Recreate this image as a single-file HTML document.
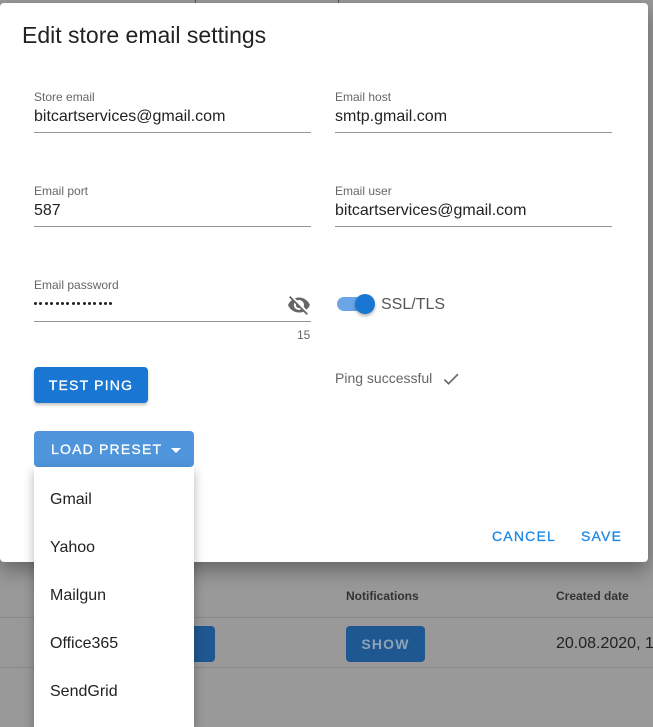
<!DOCTYPE html>
<html><head><style>
body{margin:0;width:653px;height:721px;background:#999;position:relative;overflow:hidden;font-family:"Liberation Sans",sans-serif;}
.a{position:absolute;}
.dlg{left:0;top:3px;width:648px;height:559px;background:#fff;border-radius:4px;box-shadow:0 8px 20px rgba(0,0,0,.35);}
.lbl{font-size:12px;color:#666;}
.val{font-size:16px;color:#222;}
.line{height:1px;background:#949494;}
.btn{color:#fff;font-size:14px;font-weight:normal;letter-spacing:1.2px;border-radius:4px;text-align:center;-webkit-text-stroke:0.3px #fff;}
.item{left:50px;font-size:16px;color:#222;}
.dots{display:flex;gap:2.4px;}
.dots i{display:block;width:3px;height:3px;border-radius:50%;background:#222;}
</style></head><body>
<div class="a" style="left:195px;top:0;width:1px;height:3px;background:#555"></div>
<div class="a" style="left:338px;top:0;width:1px;height:3px;background:#555"></div>
<div class="a" style="left:0;top:617px;width:653px;height:1px;background:#888"></div>
<div class="a" style="left:0;top:667px;width:653px;height:1px;background:#888"></div>
<div class="a" style="left:346px;top:589px;font-size:12px;font-weight:bold;color:#333">Notifications</div>
<div class="a" style="left:556px;top:589px;font-size:12px;font-weight:bold;color:#333">Created date</div>
<div class="a" style="left:150px;top:626px;width:65px;height:36px;background:#1f5890;border-radius:4px"></div>
<div class="a" style="left:346px;top:626px;width:79px;height:36px;line-height:36px;background:#1f5890;color:#8fa3b8;border-radius:4px;text-align:center;font-size:14px;letter-spacing:1.2px;font-weight:bold">SHOW</div>
<div class="a" style="left:556px;top:635px;font-size:16px;color:#222;white-space:nowrap">20.08.2020, 18:</div>

<div class="a dlg"></div>
<div class="a" style="left:22px;top:22px;font-size:23px;color:#222">Edit store email settings</div>

<div class="a lbl" style="left:34px;top:90px">Store email</div>
<div class="a val" style="left:34px;top:108px">bitcartservices@gmail.com</div>
<div class="a line" style="left:34px;top:132px;width:277px"></div>
<div class="a lbl" style="left:335px;top:90px">Email host</div>
<div class="a val" style="left:335px;top:108px">smtp.gmail.com</div>
<div class="a line" style="left:335px;top:132px;width:277px"></div>

<div class="a lbl" style="left:34px;top:184px">Email port</div>
<div class="a val" style="left:34px;top:202px">587</div>
<div class="a line" style="left:34px;top:226px;width:277px"></div>
<div class="a lbl" style="left:335px;top:184px">Email user</div>
<div class="a val" style="left:335px;top:202px">bitcartservices@gmail.com</div>
<div class="a line" style="left:335px;top:226px;width:277px"></div>

<div class="a lbl" style="left:34px;top:278px">Email password</div>
<div class="a dots" style="left:34px;top:302px"><i></i><i></i><i></i><i></i><i></i><i></i><i></i><i></i><i></i><i></i><i></i><i></i><i></i><i></i><i></i></div>
<svg class="a" style="left:287px;top:293px" width="24" height="24" viewBox="0 0 24 24"><path fill="#666" d="M12 7c2.8 0 5 2.2 5 5 0 .6-.1 1.3-.4 1.8l2.9 2.9c1.5-1.3 2.7-2.9 3.4-4.7-1.7-4.4-6-7.5-11-7.5-1.4 0-2.7.3-4 .7l2.2 2.2C10.7 7.1 11.4 7 12 7zM2 4.3l2.3 2.3.5.5C3.1 8.4 1.8 10.1 1 12c1.7 4.4 6 7.5 11 7.5 1.6 0 3-.3 4.4-.8l.4.4 2.9 2.9 1.3-1.3L3.3 3 2 4.3zm5.5 5.5l1.5 1.5c0 .2-.1.5-.1.7 0 1.7 1.3 3 3 3 .2 0 .4 0 .7-.1l1.5 1.5c-.7.3-1.4.5-2.2.5-2.8 0-5-2.2-5-5 0-.8.2-1.5.6-2.1z"/></svg>
<div class="a line" style="left:34px;top:321px;width:277px"></div>
<div class="a" style="left:297px;top:328px;font-size:12px;color:#666">15</div>

<div class="a" style="left:337px;top:297px;width:36px;height:14px;border-radius:7px;background:#6aa5e6"></div>
<div class="a" style="left:355px;top:294px;width:20px;height:20px;border-radius:10px;background:#1976d2;box-shadow:0 2px 3px rgba(0,0,0,.3)"></div>
<div class="a" style="left:381px;top:296px;font-size:16px;color:#555">SSL/TLS</div>

<div class="a btn" style="left:34px;top:367px;width:114px;height:36px;line-height:36px;background:#1976d2;box-shadow:0 2px 3px rgba(0,0,0,.25)">TEST PING</div>
<div class="a" style="left:335px;top:370px;font-size:14px;color:#666">Ping successful</div>
<svg class="a" style="left:441px;top:369px" width="20" height="20" viewBox="0 0 24 24"><path fill="#666" d="M9 16.2L4.8 12l-1.4 1.4L9 19 21 7l-1.4-1.4L9 16.2z"/></svg>

<div class="a btn" style="left:34px;top:431px;width:160px;height:36px;line-height:36px;background:#4f95dc;text-align:left;padding-left:17px;box-sizing:border-box">LOAD PRESET <span style="display:inline-block;margin-left:4px;width:0;height:0;border-left:5px solid transparent;border-right:5px solid transparent;border-top:5px solid #fff;vertical-align:middle"></span></div>

<div class="a" style="left:492px;top:528px;font-size:14px;letter-spacing:1.2px;color:#1e88e5;-webkit-text-stroke:0.3px #1e88e5">CANCEL</div>
<div class="a" style="left:581px;top:528px;font-size:14px;letter-spacing:1.2px;color:#1e88e5;-webkit-text-stroke:0.3px #1e88e5">SAVE</div>

<div class="a" style="left:34px;top:467px;width:160px;height:260px;background:#fff;box-shadow:0 4px 10px rgba(0,0,0,.3)"></div>
<div class="a item" style="top:491px">Gmail</div>
<div class="a item" style="top:539px">Yahoo</div>
<div class="a item" style="top:587px">Mailgun</div>
<div class="a item" style="top:635px">Office365</div>
<div class="a item" style="top:683px">SendGrid</div>
</body></html>
